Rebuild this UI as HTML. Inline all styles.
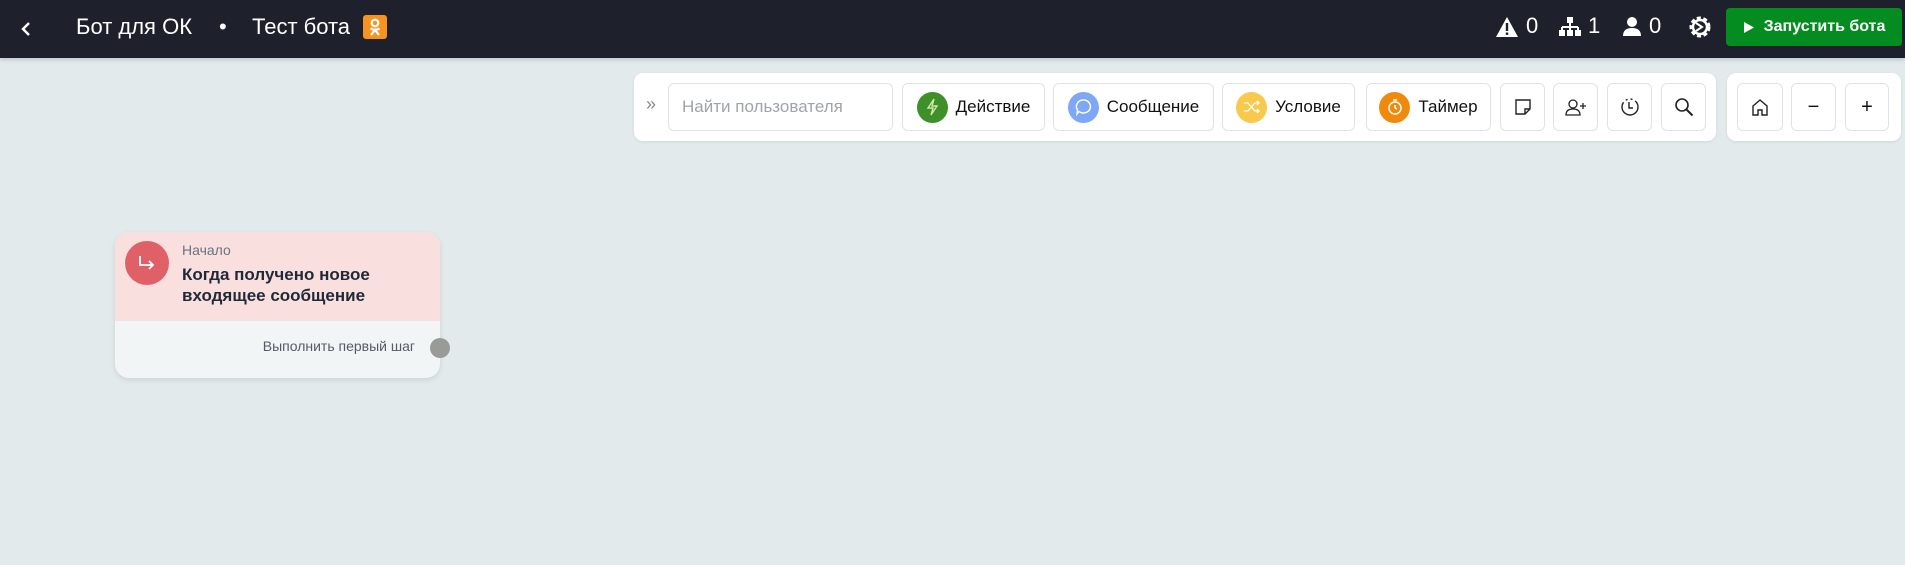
<!DOCTYPE html>
<html><head><meta charset="utf-8"><style>
*{box-sizing:border-box;margin:0;padding:0}
body{width:1905px;height:565px;background:#e3eaeb;font-family:"Liberation Sans","Noto Sans CJK SC",sans-serif;position:relative;overflow:hidden}
.hdr{position:absolute;left:0;top:0;width:1905px;height:58px;background:#1e212c;color:#fff;box-shadow:0 2px 4px rgba(0,0,0,.15)}
.a{position:absolute}
.panel{position:absolute;top:73px;height:68px;background:#fff;border-radius:9px;box-shadow:0 1px 3px rgba(0,0,0,.08)}
.btn{position:absolute;top:83px;height:48px;background:#fff;border:1px solid #dfe3e6;border-radius:6px;display:flex;align-items:center;justify-content:center;font-size:17px;color:#111}
.ic{width:31px;height:31px;border-radius:50%;display:flex;align-items:center;justify-content:center;margin-right:8px}
</style></head><body>
<div class="hdr">
 <svg class="a" style="left:20px;top:20px" width="14" height="18" viewBox="0 0 14 18"><path d="M9 3L3 9l6 6" stroke="#fff" stroke-width="2.4" fill="none"/></svg>
 <div class="a" style="left:76px;top:14px;font-size:22px">Бот для ОК</div>
 <div class="a" style="left:219px;top:14px;font-size:22px">•</div>
 <div class="a" style="left:252px;top:14px;font-size:22px">Тест бота</div>
 <div class="a" style="left:363px;top:15px;width:24px;height:24px;background:#f7931e;border-radius:3px">
  <svg width="24" height="24" viewBox="0 0 24 24"><circle cx="12" cy="8" r="3.3" stroke="#fff" stroke-width="2.2" fill="none"/><path d="M7.5 13.5q4.5 2.5 9 0M12 15l-4 5M12 15l4 5" stroke="#fff" stroke-width="2.2" fill="none"/></svg>
 </div>
 <svg class="a" style="left:1495px;top:16px" width="24" height="22" viewBox="0 0 24 22"><path d="M12 1L23 21H1z" fill="#fff"/><rect x="10.8" y="7" width="2.4" height="8" fill="#1e212c"/><rect x="10.8" y="16.5" width="2.4" height="2.4" fill="#1e212c"/></svg>
 <div class="a" style="left:1526px;top:13px;font-size:22px">0</div>
 <svg class="a" style="left:1558px;top:17px" width="24" height="20" viewBox="0 0 24 20"><rect x="9" y="0" width="6" height="6" fill="#fff"/><path d="M12 6v4M4 10h16M4 10v4M12 10v4M20 10v4" stroke="#fff" stroke-width="2" fill="none"/><rect x="1" y="13" width="6" height="6" fill="#fff"/><rect x="9" y="13" width="6" height="6" fill="#fff"/><rect x="17" y="13" width="6" height="6" fill="#fff"/></svg>
 <div class="a" style="left:1588px;top:13px;font-size:22px">1</div>
 <svg class="a" style="left:1622px;top:16px" width="20" height="21" viewBox="0 0 20 21"><circle cx="10" cy="6" r="5" fill="#fff"/><path d="M1 20q0-8 9-8t9 8z" fill="#fff"/></svg>
 <div class="a" style="left:1649px;top:13px;font-size:22px">0</div>
 <svg class="a" style="left:1687px;top:14px" width="26" height="26" viewBox="0 0 26 26"><circle cx="13" cy="13" r="9" stroke="#fff" stroke-width="3" fill="none" stroke-dasharray="4 2.5"/><circle cx="13" cy="13" r="7" stroke="#fff" stroke-width="2.5" fill="none"/><path d="M9 9l6 4-6 4" stroke="#fff" stroke-width="2" fill="none"/></svg>
 <div class="a" style="left:1726px;top:8px;width:176px;height:38px;background:#058c20;border-radius:4px;display:flex;align-items:center;justify-content:center;font-size:16px;font-weight:bold;color:#fff">
  <svg width="12" height="13" viewBox="0 0 12 13" style="margin-right:9px"><path d="M1 1l10 5.5L1 12z" fill="#fff"/></svg>Запустить бота</div>
</div>

<div class="panel" style="left:634px;width:1082px"></div>
<div class="panel" style="left:1727px;width:174px"></div>
<div class="a" style="left:646px;top:94px;font-size:18px;color:#888">»</div>
<div class="btn" style="left:668px;width:225px;justify-content:flex-start;padding-left:13px;color:#a0a4a8">Найти пользователя</div>
<div class="btn" style="left:902px;width:143px"><div class="ic" style="background:#3f8f2a"><svg width="14" height="18" viewBox="0 0 14 18"><path d="M9 1L3 10h5l-2 7 6-9H7z" stroke="#cfe9a8" stroke-width="1.4" fill="none"/></svg></div>Действие</div>
<div class="btn" style="left:1053px;width:161px"><div class="ic" style="background:#7ea8f7"><svg width="18" height="18" viewBox="0 0 18 18"><path d="M9 2a7 6.5 0 1 1-4 11.5L3 16l.5-4A7 6.5 0 0 1 9 2z" stroke="#fff" stroke-width="1.4" fill="none"/></svg></div>Сообщение</div>
<div class="btn" style="left:1222px;width:133px"><div class="ic" style="background:#f9c94c"><svg width="18" height="16" viewBox="0 0 18 16"><path d="M1 4h4l7 8h4M1 12h4l7-8h4M14 2l2 2-2 2M14 10l2 2-2 2" stroke="#fff" stroke-width="1.3" fill="none"/></svg></div>Условие</div>
<div class="btn" style="left:1366px;width:125px"><div class="ic" style="background:#f08a0c"><svg width="18" height="18" viewBox="0 0 18 18"><circle cx="9" cy="10" r="6" stroke="#fff" stroke-width="1.5" fill="none"/><path d="M7 2h4M9 10V7M9 10l2 1" stroke="#fff" stroke-width="1.5" fill="none"/></svg></div>Таймер</div>
<div class="btn" style="left:1500px;width:45px"><svg width="18" height="18" viewBox="0 0 18 18"><path d="M2 2h14v9l-5 5H2z" stroke="#222" stroke-width="1.4" fill="none"/><path d="M16 11h-5v5" stroke="#222" stroke-width="1.4" fill="none"/></svg></div>
<div class="btn" style="left:1553px;width:45px"><svg width="22" height="18" viewBox="0 0 22 18"><circle cx="8" cy="6" r="4" stroke="#222" stroke-width="1.3" fill="none"/><path d="M1 17q0-6 7-6t7 6z" stroke="#222" stroke-width="1.3" fill="none"/><path d="M18 5v6M15 8h6" stroke="#222" stroke-width="1.3"/></svg></div>
<div class="btn" style="left:1607px;width:45px"><svg width="20" height="20" viewBox="0 0 20 20"><circle cx="10" cy="10" r="8" stroke="#222" stroke-width="1.4" fill="none" stroke-dasharray="30 3 2 3 2 3"/><path d="M9 5v6h4" stroke="#222" stroke-width="1.4" fill="none"/></svg></div>
<div class="btn" style="left:1661px;width:45px"><svg width="20" height="20" viewBox="0 0 20 20"><circle cx="8" cy="8" r="6" stroke="#222" stroke-width="1.6" fill="none"/><path d="M12.5 12.5l6 6" stroke="#222" stroke-width="2"/></svg></div>
<div class="btn" style="left:1737px;width:46px"><svg width="20" height="20" viewBox="0 0 20 20"><path d="M3 9l7-6 7 6v9h-5v-5H8v5H3z" stroke="#222" stroke-width="1.4" fill="none"/></svg></div>
<div class="btn" style="left:1791px;width:45px;font-size:20px">−</div>
<div class="btn" style="left:1845px;width:44px;font-size:20px">+</div>

<div class="a" style="left:115px;top:232px;width:325px;height:146px;border-radius:14px;overflow:hidden;background:#f2f5f6;box-shadow:0 2px 6px rgba(0,0,0,.1)">
 <div style="height:89px;background:#fadfdf"></div>
</div>
<div class="a" style="left:125px;top:241px;width:44px;height:44px;border-radius:50%;background:#e06068">
 <svg width="44" height="44" viewBox="0 0 44 44"><path d="M15 15v9h13M24 20l4 4-4 4" stroke="#fff" stroke-width="1.8" fill="none"/></svg>
</div>
<div class="a" style="left:182px;top:242px;font-size:14px;color:#6b7280">Начало</div>
<div class="a" style="left:182px;top:264px;font-size:17px;line-height:21px;color:#1f2937;font-weight:600">Когда получено новое<br>входящее сообщение</div>
<div class="a" style="left:200px;top:338px;width:215px;text-align:right;font-size:14px;color:#555b66">Выполнить первый шаг</div>
<div class="a" style="left:430px;top:338px;width:20px;height:20px;border-radius:50%;background:#999b99"></div>
</body></html>
